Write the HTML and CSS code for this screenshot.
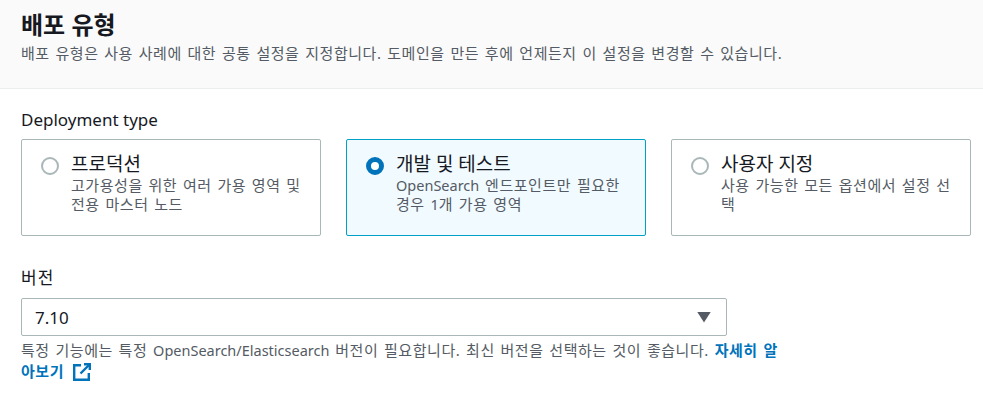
FILE: index.html
```html
<!DOCTYPE html>
<html lang="ko">
<head>
  <meta charset="UTF-8" />
  <title>배포 유형</title>
  <link rel="stylesheet" href="styles.css">
</head>
<body>

  <header class="panel-header">
    <h2>배포 유형</h2>
    <p>배포 유형은 사용 사례에 대한 공통 설정을 지정합니다. 도메인을 만든 후에 언제든지 이 설정을 변경할 수 있습니다.</p>
  </header>

  <main class="panel-body">
    <div class="field-label type-label">Deployment type</div>
    <div class="tiles">
      <div class="tile">
        <span class="radio"></span>
        <div class="tile-text">
          <div class="tile-title">프로덕션</div>
          <div class="tile-desc">고가용성을 위한 여러 가용 영역 및 전용 마스터 노드</div>
        </div>
      </div>
      <div class="tile selected">
        <span class="radio"></span>
        <div class="tile-text">
          <div class="tile-title">개발 및 테스트</div>
          <div class="tile-desc"><span class="en">OpenSearch</span> 엔드포인트만 필요한 경우 <span class="en">1</span>개 가용 영역</div>
        </div>
      </div>
      <div class="tile">
        <span class="radio"></span>
        <div class="tile-text">
          <div class="tile-title">사용자 지정</div>
          <div class="tile-desc">사용 가능한 모든 옵션에서 설정 선택</div>
        </div>
      </div>
    </div>

    <div class="field-label version-label">버전</div>
    <div class="select">
      <span>7.10</span>
      <span class="caret"></span>
    </div>
    <p class="hint">특정 기능에는 특정 <span class="en">OpenSearch/Elasticsearch</span> 버전이 필요합니다. 최신 버전을 선택하는 것이 좋습니다. <a href="#">자세히 알아보기<svg class="ext" width="18" height="18" viewBox="0 0 18 18" fill="none" stroke="#0073bb" stroke-width="2.4"><path d="M8 2.2H1.2v14.6h14.6V10"/><path d="M11 1.2h5.8V7"/><path d="M16.5 1.5L7.5 10.5"/></svg></a></p>
  </main>

</body>
</html>
```

FILE: styles.css
```css
* {
  margin: 0;
  padding: 0;
  box-sizing: border-box;
}

body {
  background-color: white;
  color: #16191f;
  font-family: "Noto Sans", "Noto Sans CJK KR", sans-serif;
  font-size: 15px;
  overflow: hidden;
}

.en {
  font-size: 14.5px;
  letter-spacing: 0;
  word-spacing: 0;
}

.panel-header {
  height: 89px;
  padding: 9px 21px 0;
  background-color: #fafafa;
  border-bottom: 1px solid #eaeded;
}

.panel-header h2 {
  font-size: 24px;
  line-height: 32px;
  font-weight: 700;
}

.panel-header p,
.tile-desc,
.hint {
  font-size: 15px;
  letter-spacing: 0.55px;
  word-spacing: 1.3px;
  color: #545b64;
}

.panel-header p {
  line-height: 21px;
  margin-top: 2px;
}

.panel-body {
  padding: 20px 12px 0 21px;
}

.field-label {
  font-size: 17px;
  line-height: 22px;
}

.version-label {
  margin-top: 31px;
  letter-spacing: 1px;
}

.tiles {
  display: flex;
  gap: 25px;
  margin-top: 8px;
}

.tile {
  width: 300px;
  height: 97px;
  display: flex;
  gap: 12px;
  padding: 13px 15px 13px 19px;
  background-color: white;
  border: 1px solid #aab7b8;
  border-radius: 2px;
}

.tile.selected {
  background-color: #f1faff;
  border-color: #00a1c9;
}

.radio {
  flex: none;
  width: 18px;
  height: 18px;
  margin-top: 4px;
  background-color: white;
  border: 2px solid #aab7b8;
  border-radius: 50%;
}

.selected .radio {
  border: 5px solid #0073bb;
}

.tile-title {
  font-size: 19px;
  line-height: 22px;
  margin-bottom: 1px;
}

.tile-desc {
  line-height: 19px;
}

.select {
  width: 706px;
  height: 38px;
  margin-top: 9px;
  padding: 0 15px 0 13px;
  display: flex;
  justify-content: space-between;
  align-items: center;
  font-size: 17px;
  border: 1px solid #aab7b8;
  border-radius: 2px;
}

.caret {
  width: 14px;
  height: 11px;
  background-color: #545b64;
  clip-path: polygon(0 0, 100% 0, 50% 100%);
}

.hint {
  width: 765px;
  margin-top: 4px;
  line-height: 21px;
}

.hint a {
  color: #0073bb;
  font-weight: 700;
  text-decoration: none;
}

.ext {
  margin-left: 9px;
  vertical-align: -4px;
}
```
